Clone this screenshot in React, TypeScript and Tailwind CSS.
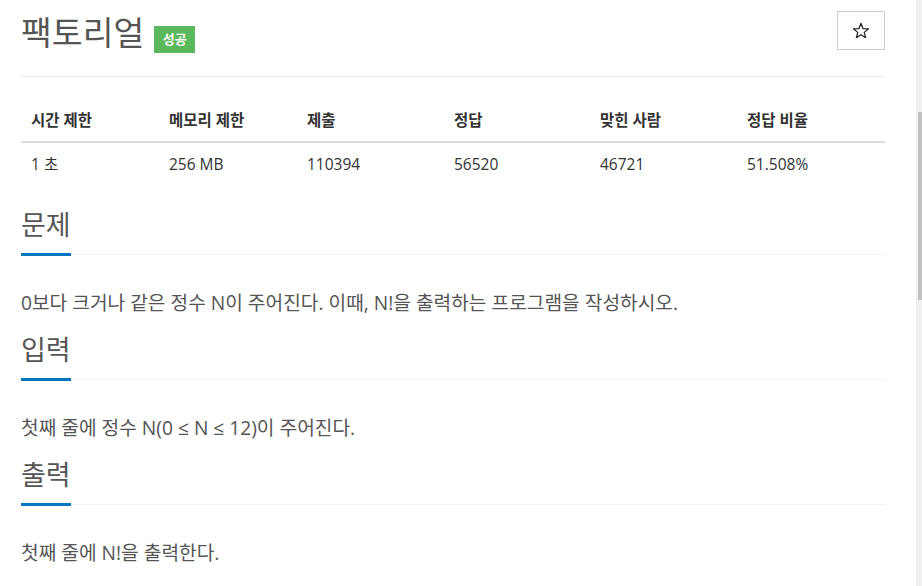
import React from "react";

const font = { fontFamily: '"Open Sans", "Noto Sans CJK KR", sans-serif' };

function Section({ title, text }: { title: string; text: string }) {
  return (
    <section className="mb-[14px]">
      <div className="flex border-b border-dotted border-[#e4e9f0]">
        <h2 className="text-[27px] leading-[36px] pb-[10px] border-b-[3px] border-[#0076c0] -mb-[2px] text-[#555] font-normal">
          {title}
        </h2>
      </div>
      <p className="mt-[33px] text-[19.2px] leading-[30px] text-[#555]">{text}</p>
    </section>
  );
}

export default function App() {
  const headers = ["시간 제한", "메모리 제한", "제출", "정답", "맞힌 사람", "정답 비율"];
  const values = ["1 초", "256 MB", "110394", "56520", "46721", "51.508%"];
  const grid = "grid grid-cols-[138px_138px_147px_146px_147px_1fr]";
  return (
    <div className="flex h-[586px] w-[922px] overflow-hidden bg-white" style={font}>
      <main className="flex-1 pl-[21px] pr-[31px]">
        <div className="flex items-start h-[77px] border-b border-[#eee]">
          <h1 className="mt-[12px] text-[33.5px] leading-[40px] font-normal text-[#555]">팩토리얼</h1>
          <span className="mt-[26px] ml-[10px] h-[27px] w-[41px] flex items-center justify-center bg-[#5cb85c] text-white text-[13px] font-bold">
            성공
          </span>
          <div className="flex-1" />
          <button className="mt-[11px] h-[39px] w-[48px] border border-[#ccc] bg-white flex items-center justify-center">
            <svg width="16" height="15" viewBox="0 0 16 15">
              <polygon
                points="8,0.3 10,5.55 15.61,5.83 11.23,9.35 12.7,14.77 8,11.7 3.3,14.77 4.77,9.35 0.39,5.83 6,5.55"
                fill="none"
                stroke="#222"
                strokeWidth="1.2"
                strokeLinejoin="miter"
              />
            </svg>
          </button>
        </div>

        <div className="mt-[24px] text-[15.5px] text-[#333]">
          <div className={`${grid} h-[42px] items-center border-b-2 border-[#ddd] font-bold`}>
            {headers.map((h) => (
              <div key={h} className="pl-[10px]">{h}</div>
            ))}
          </div>
          <div className={`${grid} h-[42px] items-center pt-[2px]`}>
            {values.map((v) => (
              <div key={v} className="pl-[10px]">{v}</div>
            ))}
          </div>
        </div>

        <div className="mt-[22px]">
          <Section title="문제" text="0보다 크거나 같은 정수 N이 주어진다. 이때, N!을 출력하는 프로그램을 작성하시오." />
          <Section title="입력" text="첫째 줄에 정수 N(0 ≤ N ≤ 12)이 주어진다." />
          <Section title="출력" text="첫째 줄에 N!을 출력한다." />
        </div>
      </main>
      <div className="w-[6px] bg-[#f0f0f0] flex flex-col">
        <div className="mt-[112px] ml-[2px] h-[188px] w-[4px] bg-[#c1c1c1]" />
      </div>
    </div>
  );
}
